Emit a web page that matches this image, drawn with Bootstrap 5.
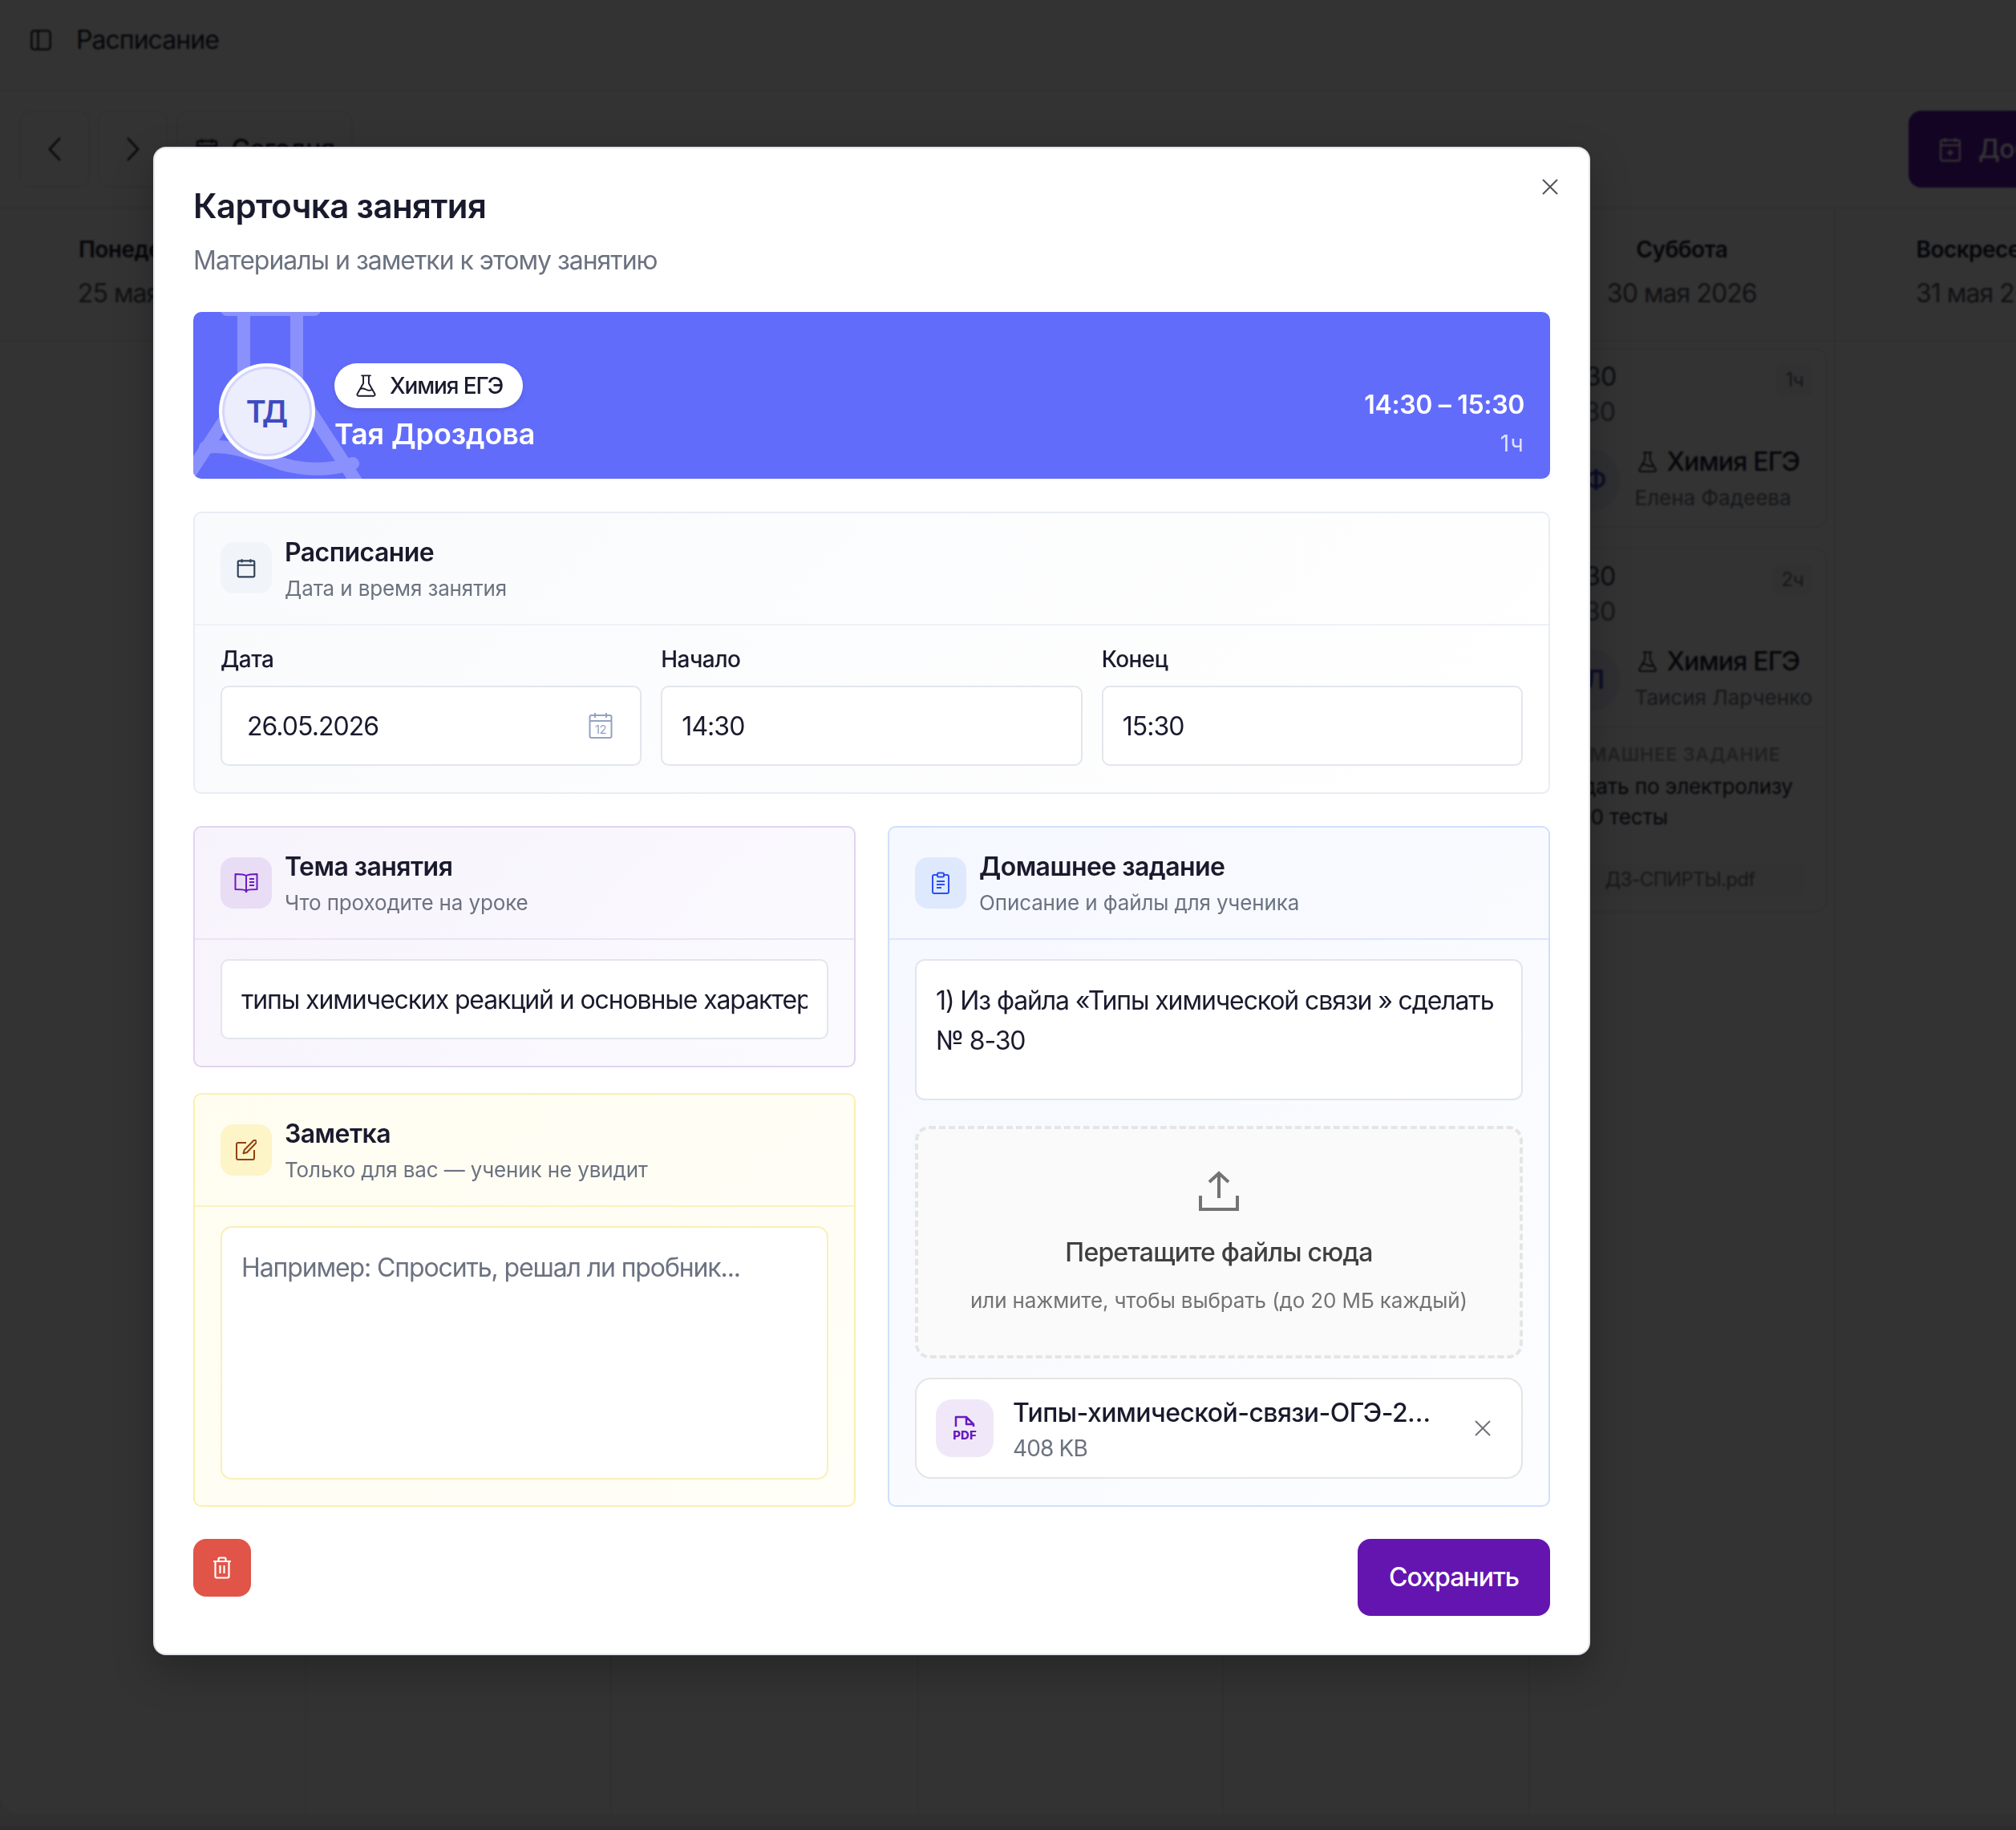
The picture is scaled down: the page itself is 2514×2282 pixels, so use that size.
<!doctype html>
<html lang="ru">
<head>
<meta charset="utf-8">
<title>Карточка занятия</title>
<link href="https://cdn.jsdelivr.net/npm/bootstrap@5.3.0/dist/css/bootstrap.min.css" rel="stylesheet">
<style>
html,body{margin:0;height:100%;overflow:hidden}
body{font-family:Inter,"Noto Sans",sans-serif;background:#f0f0f0;color:#1a1a2e;letter-spacing:-.02em;font-size:28px}
.app-main{height:2262px;background:#fff;border-bottom-left-radius:24px;overflow:hidden;width:2514px}
.app-strip{height:5px;margin-top:15px;background:#d8dbe0}
.app-top{height:114px;border-bottom:2px solid #ececec;padding:0 0 12px 37px;gap:30px;font-size:32px;letter-spacing:-.03em}
.app-tools{height:146px;border-bottom:2px solid #ececec;padding:24px;gap:10px;justify-content:flex-start}
.tool-btn{height:96px;width:88px;border:2px solid #f0f0f0;border-radius:14px;background:#fff}
.tool-today{width:220px;gap:16px;font-size:32px;font-weight:500}
.tool-add{margin-left:auto;width:300px;margin-right:-190px;background:#6415b0;color:#fff;border-radius:16px;height:96px;font-size:32px;font-weight:500;gap:20px;padding-left:37px}
.day-grid{height:2004px;width:2670.5px}
.day-col{flex:0 0 381.5px;min-width:0;border-right:2px solid #ececec}
.day-head{height:166px;border-bottom:2px solid #ececec;padding-top:31px;text-align:center}
.day-name{font-size:28px;font-weight:600;line-height:40px}
.day-date{font-size:32px;line-height:46px;margin-top:12px;color:#52525b;letter-spacing:-.03em}
.day-body{padding:8px 8px}
.lesson{border:2px solid #e8e8e8;border-radius:16px;margin-left:2px;margin-bottom:25px;overflow:hidden;height:224px}
.lesson-lg{height:455px}
.lesson-top{padding:12px 16px 0 16px}
.lesson-times{font-size:32px;font-weight:400;line-height:44px;color:#374151}
.lesson-times div+div{color:#6b7280}
.lesson-dur{font-size:24px;color:#6b7280;background:#f4f4f5;border-radius:10px;padding:0 12px;height:40px;line-height:40px;margin-top:6px}
.lesson-who{padding:19px 12px 0 21px;gap:18px}
.lesson-ava{width:80px;height:80px;border-radius:50%;background:#eef0ff;color:#3f4ac0;font-weight:600;font-size:32px;flex:none}
.lesson-subj{font-size:32px;font-weight:500;line-height:42px;gap:13px;padding-left:4px;letter-spacing:-.025em}
.lesson-name{font-size:26px;line-height:42px;margin-top:3px;color:#6b7280;letter-spacing:0}
.lesson-hw{border-top:2px solid #f0f0f0;margin-top:15px;padding:18px 24px}
.hw-cap{font-size:23px;font-weight:600;letter-spacing:.033em;color:#a1a1aa;line-height:30px;white-space:nowrap}
.hw-text{font-size:26px;line-height:38px;margin-top:6px;letter-spacing:-.004em}
.hw-file{font-size:24px;color:#6b7280;letter-spacing:-.03em;margin-top:38px;background:#fafafa;border-radius:10px;padding:4px 0 4px 58px;line-height:34px}

.scrim{background:rgba(0,0,0,.8);backdrop-filter:blur(1px);opacity:1}
.sheet{position:fixed;left:191px;top:183px;width:1792px;height:1881px;margin:0;max-width:none;z-index:1060}
.sheet-box{border:2px solid #e2e6ec;border-radius:16px;background:#fff;padding:48px;box-shadow:0 20px 50px rgba(0,0,0,.25);height:100%}
.sheet-close{position:absolute;right:38px;top:38px;width:20px;height:20px;padding:0;border:0;background:none;line-height:0}
.sheet-title{font-size:42px;font-weight:600;line-height:48px;margin:0;color:#1a1a2e;letter-spacing:-.015em}
.sheet-sub{font-size:32px;line-height:40px;margin:24px 0 44px;color:#6b7280;letter-spacing:-.032em}
.hero{height:208px;background:#626cfb;border-radius:10px;padding:64px 32px 24px;overflow:hidden;gap:24px;color:#fff;margin-bottom:41px}
.hero-flask{position:absolute;left:0;top:0}
.hero-ava{width:120px;height:120px;border-radius:50%;background:#ecedfd;border:4px solid #fff;box-shadow:inset 0 0 0 3px #d3d6fb;color:#3f4ac0;font-size:38px;font-weight:600;flex:none;letter-spacing:0}
.hero-chip{height:56px;border-radius:28px;background:#fff;color:#1a1a2e;font-size:28px;font-weight:500;padding:0 25px 0 27px;gap:17px;box-shadow:0 2px 6px rgba(0,0,0,.12);letter-spacing:-.04em}
.hero-name{font-size:36px;font-weight:600;line-height:48px;margin-top:8px;letter-spacing:-.003em}
.hero-time{font-size:32px;font-weight:600;line-height:40px;margin-bottom:8px;letter-spacing:-.01em}
.hero-dur{font-size:28px;line-height:40px;opacity:.8;letter-spacing:.05em}
.zone{border:2px solid #e8edf4;border-radius:10px;overflow:hidden;background:linear-gradient(135deg,#f9fafc,#fff)}
.zone-gap{margin-bottom:40px}
.zone-head{padding:24px 32px;gap:16px;border-bottom:2px solid #eef1f6;height:140px}
.zone-ico{width:64px;height:64px;border-radius:16px;background:#f1f5f9;color:#334155;flex:none;margin-top:-2px}
.zone-t{font-size:32px;font-weight:600;line-height:48px;padding-top:2px;color:#1a1a2e}
.zone-s{font-size:26px;line-height:42px;color:#6b7280;letter-spacing:-.005em}
.zone-body{padding:24px 32px 33px}
.z-violet{border-color:#e2d3f2;background:linear-gradient(135deg,#f7f3fc,#fbfbff)}
.z-violet .zone-head{border-color:#ece3f6}
.z-violet .zone-ico{background:#e9ddf5;color:#6a1bc0;margin-top:0}
.z-blue{border-color:#cfe0fc;background:linear-gradient(135deg,#f5f8ff,#fcfdff)}
.z-blue .zone-head{border-color:#dbe7fc}
.z-blue .zone-ico{background:#dfe9fd;color:#2b50f0;margin-top:0}
.z-blue .zone-body{padding-bottom:32px}
.z-yellow{border-color:#fbefb0;background:linear-gradient(135deg,#fffdf0,#fffef8)}
.z-yellow .zone-head{border-color:#fbf1c4}
.z-yellow .zone-ico{background:#fdf4c8;color:#92400e;margin-top:0}
.z-yellow .zone-body{padding-bottom:32px}
.fld-label{font-size:28px;font-weight:500;line-height:36px;margin-bottom:15px;display:block;color:#1a1a2e}
.fld{height:100px;border:2px solid #e2e6ec;border-radius:10px;font-size:32px;padding:0 24px;color:#1a1a2e;letter-spacing:-.03em;box-shadow:none;background-color:#fff}
.fld-date{padding-left:31px}
.fld-cal{position:absolute;right:36px;top:33px}
.fld-topic{font-weight:400;letter-spacing:-.035em;font-size:32px}
.fld-area{border:2px solid #e2e6ec;border-radius:12px;font-size:32px;line-height:50px;padding:25px 24px 23px;color:#1a1a2e;letter-spacing:-.035em;resize:none;box-shadow:none}
.fld-area::placeholder{color:#6b7280;opacity:1}
.fld-note{height:316px;border-color:#fbefb8;border-radius:14px}
.fld-hw{height:176px}
.drop{height:290px;border:4px dashed #e5e5e5;border-radius:18px;background:#fafafa;margin-top:32px;padding-top:52px;text-align:center}
.drop-ico{height:56px}
.drop-t{font-size:32px;font-weight:500;line-height:48px;margin-top:22px;color:#404040;letter-spacing:-.025em}
.drop-s{font-size:26px;line-height:40px;margin-top:16px;color:#737373;letter-spacing:-.005em}
.afile{height:126px;border:2px solid #e5e5e5;border-radius:20px;background:#fff;margin-top:24px;padding:0 38px 0 24px;gap:24px}
.afile-ico{width:72px;height:72px;border-radius:20px;background:#f0e8f8;color:#6a1bc0;flex:none}
.afile-txt{padding-top:3px}
.afile-name{font-size:32px;font-weight:500;line-height:46px;max-width:526px;letter-spacing:-.018em}
.afile-size{font-size:28px;line-height:40px;margin-top:1px;color:#6b7280;letter-spacing:-.03em}
.btn-del{width:72px;height:72px;padding:0;border:0;border-radius:16px;background:#e05548}
.btn-del:hover{background:#e05548}
.btn-keep{width:240px;height:96px;padding:0;border:0;border-radius:16px;background:#6415b0;color:#fff;font-size:32px;font-weight:500;letter-spacing:-.03em}
.btn-keep:hover{background:#6415b0;color:#fff}
.grid-two{gap:40px}
.grid-two>*{flex:0 0 826px;width:826px;padding:0}
.gap-col{gap:32px}
.foot{margin-top:40px}
svg{display:block}
</style>
</head>
<body>
<svg class="position-absolute" width="0" height="0">
<defs>
<symbol id="i-flask" viewBox="3 1.5 18 20.5"><path d="M9.5 2.5v7L4 19.2a1.3 1.3 0 0 0 1.1 1.9h13.800a1.300 1.300 0 0 0 1.100-1.900L14.500 9.500v-7M8 2.500h8M7 14.600c2-.8 3.400-.3 5 .6s3.400 1.200 5.300.2" fill="none" stroke="currentColor" stroke-width="1.400" stroke-linecap="round" stroke-linejoin="round"/></symbol>
<symbol id="i-cal" viewBox="0 0 24 24"><path d="M7 2v4M17 2v4M2.5 9h19M4 4h16a1.5 1.5 0 0 1 1.5 1.5V21a1.5 1.5 0 0 1-1.5 1.5H4A1.5 1.5 0 0 1 2.5 21V5.500A1.500 1.500 0 0 1 4 4z" fill="none" stroke="currentColor" stroke-width="2"/></symbol>
</defs>
</svg>
<div class="app-main">
  <div class="app-top d-flex align-items-center">
    <svg width="28" height="28" viewBox="0 0 24 24" fill="none" stroke="#1a1a2e" stroke-width="2"><rect x="2" y="2" width="20" height="20" rx="3"/><path d="M9 2v20"/></svg>
    <span>Расписание</span>
  </div>
  <div class="app-tools d-flex align-items-start">
    <div class="tool-btn d-flex align-items-center justify-content-center"><svg width="20" height="34" viewBox="0 0 20 34" fill="none" stroke="#1a1a2e" stroke-width="2.500"><path d="M17 3 4 17l13 14"/></svg></div>
    <div class="tool-btn d-flex align-items-center justify-content-center"><svg width="20" height="34" viewBox="0 0 20 34" fill="none" stroke="#1a1a2e" stroke-width="2.500"><path d="M3 3l13 14L3 31"/></svg></div>
    <div class="tool-btn tool-today d-flex align-items-center justify-content-center"><svg width="30" height="30"><use href="#i-cal"/></svg><span>Сегодня</span></div>
    <div class="tool-add d-flex align-items-center"><svg width="30" height="32" viewBox="0 0 24 24" fill="none" stroke="#fff" stroke-width="1.800"><path d="M7 1v4M17 1v4M2.500 8h19M4 3h16a1.500 1.500 0 0 1 1.500 1.500V22a1.500 1.500 0 0 1-1.500 1.500H4A1.500 1.500 0 0 1 2.500 22V4.500A1.500 1.500 0 0 1 4 3zM12 12.500v6M9 15.500h6"/></svg><span class="text-nowrap">Добавить</span></div>
  </div>
  <div class="day-grid d-flex">
    <div class="day-col"><div class="day-head"><div class="day-name">Понедельник</div><div class="day-date">25 мая 2026</div></div></div>
    <div class="day-col"><div class="day-head"><div class="day-name">Вторник</div><div class="day-date">26 мая 2026</div></div></div>
    <div class="day-col"><div class="day-head"><div class="day-name">Среда</div><div class="day-date">27 мая 2026</div></div></div>
    <div class="day-col"><div class="day-head"><div class="day-name">Четверг</div><div class="day-date">28 мая 2026</div></div></div>
    <div class="day-col"><div class="day-head"><div class="day-name">Пятница</div><div class="day-date">29 мая 2026</div></div></div>
    <div class="day-col">
      <div class="day-head"><div class="day-name">Суббота</div><div class="day-date">30 мая 2026</div></div>
      <div class="day-body">
        <div class="lesson">
          <div class="lesson-top d-flex justify-content-between"><div class="lesson-times"><div>14:30</div><div>15:30</div></div><div class="lesson-dur">1ч</div></div>
          <div class="lesson-who d-flex align-items-center"><div class="lesson-ava d-flex align-items-center justify-content-center">ЕФ</div><div><div class="lesson-subj d-flex align-items-center"><svg width="23" height="26"><use href="#i-flask"/></svg><span>Химия ЕГЭ</span></div><div class="lesson-name">Елена Фадеева</div></div></div>
        </div>
        <div class="lesson lesson-lg">
          <div class="lesson-top d-flex justify-content-between"><div class="lesson-times"><div>16:30</div><div>18:30</div></div><div class="lesson-dur">2ч</div></div>
          <div class="lesson-who d-flex align-items-center"><div class="lesson-ava d-flex align-items-center justify-content-center">ТЛ</div><div><div class="lesson-subj d-flex align-items-center"><svg width="23" height="26"><use href="#i-flask"/></svg><span>Химия ЕГЭ</span></div><div class="lesson-name text-nowrap">Таисия Ларченко</div></div></div>
          <div class="lesson-hw"><div class="hw-cap">ДОМАШНЕЕ ЗАДАНИЕ</div><div class="hw-text">Задать по электролизу<br>1–40 тесты</div><div class="hw-file">ДЗ-СПИРТЫ.pdf</div></div>
        </div>
      </div>
    </div>
    <div class="day-col"><div class="day-head"><div class="day-name">Воскресенье</div><div class="day-date">31 мая 2026</div></div></div>
  </div>
</div>
<div class="app-strip"></div>

<div class="modal-backdrop scrim"></div>
<div class="sheet modal-dialog">
  <div class="modal-content sheet-box d-block">
    <button type="button" class="sheet-close" aria-label="Закрыть"><svg width="20" height="20" viewBox="0 0 20 20" fill="none" stroke="#52525b" stroke-width="2"><path d="M1 1l18 18M19 1 1 19"/></svg></button>
    <h2 class="sheet-title">Карточка занятия</h2>
    <p class="sheet-sub">Материалы и заметки к этому занятию</p>

    <div class="hero d-flex position-relative">
      <svg class="hero-flask" width="300" height="208" viewBox="0 0 300 208" fill="none" stroke="#8b91fc" stroke-width="16" stroke-linecap="round"><path d="M63-3V98L-27 236M129-3V98l100 153M42-3h109M15 169c34-5 64 10 94 20 30 9 60 9 90 0"/></svg>
      <div class="hero-ava d-flex align-items-center justify-content-center position-relative">ТД</div>
      <div class="position-relative">
        <div class="hero-chip d-inline-flex align-items-center"><svg width="25" height="28"><use href="#i-flask"/></svg><span>Химия ЕГЭ</span></div>
        <div class="hero-name">Тая Дроздова</div>
      </div>
      <div class="ms-auto text-end align-self-end">
        <div class="hero-time">14:30 – 15:30</div>
        <div class="hero-dur">1ч</div>
      </div>
    </div>

    <section class="zone zone-gap">
      <div class="zone-head d-flex align-items-center">
        <div class="zone-ico d-flex align-items-center justify-content-center"><svg width="26" height="28"><use href="#i-cal"/></svg></div>
        <div><div class="zone-t">Расписание</div><div class="zone-s">Дата и время занятия</div></div>
      </div>
      <div class="zone-body">
        <div class="row g-0 gap-4 flex-nowrap">
          <div class="col"><label class="fld-label">Дата</label>
            <div class="position-relative"><input class="form-control fld fld-date" value="26.05.2026">
            <svg class="fld-cal" width="30" height="34" viewBox="0 0 30 34" fill="none" stroke="#94a3c0" stroke-width="2"><rect x="1.500" y="4" width="27" height="28" rx="2"/><path d="M1.500 11h27M8 1v6M22 1v6"/><text x="15" y="27" text-anchor="middle" font-family="Inter" font-size="15" fill="#94a3c0" stroke="none">12</text></svg></div></div>
          <div class="col"><label class="fld-label">Начало</label><input class="form-control fld" value="14:30"></div>
          <div class="col"><label class="fld-label">Конец</label><input class="form-control fld" value="15:30"></div>
        </div>
      </div>
    </section>

    <div class="row g-0 flex-nowrap grid-two">
      <div class="d-flex flex-column gap-col">
        <section class="zone z-violet">
          <div class="zone-head d-flex align-items-center">
            <div class="zone-ico d-flex align-items-center justify-content-center"><svg width="30" height="26" viewBox="0 0 30 26" fill="none" stroke="currentColor" stroke-width="2" stroke-linejoin="round"><path d="M15 4C12 2 7 2 1.500 2v19C7 21 12 21 15 22.500 18 21 23 21 28.500 21V2C23 2 18 2 15 4zM15 4v18.500M19 8h6M19 12h6M19 16h6"/><path d="M15 23v2" stroke-width="2.500"/></svg></div>
            <div><div class="zone-t">Тема занятия</div><div class="zone-s">Что проходите на уроке</div></div>
          </div>
          <div class="zone-body"><input class="form-control fld fld-topic" value="типы химических реакций и основные характеристики"></div>
        </section>
        <section class="zone z-yellow">
          <div class="zone-head d-flex align-items-center">
            <div class="zone-ico d-flex align-items-center justify-content-center"><svg width="26" height="26" viewBox="0 0 26 26" fill="none" stroke="currentColor" stroke-width="2" stroke-linejoin="round"><path d="M13 4H3a2 2 0 0 0-2 2v17a2 2 0 0 0 2 2h18a2 2 0 0 0 2-2V13"/><path d="M22 1.500a2.100 2.100 0 0 1 3 3L14 16l-4.500 1.200L10.700 13z"/></svg></div>
            <div><div class="zone-t">Заметка</div><div class="zone-s">Только для вас — ученик не увидит</div></div>
          </div>
          <div class="zone-body"><textarea class="form-control fld-area fld-note" placeholder="Например: Спросить, решал ли пробник..."></textarea></div>
        </section>
      </div>
      <section class="zone z-blue col-hw">
        <div class="zone-head d-flex align-items-center">
          <div class="zone-ico d-flex align-items-center justify-content-center"><svg width="22" height="28" viewBox="0 0 22 28" fill="none" stroke="currentColor" stroke-width="2" stroke-linejoin="round"><path d="M7 4H3a2 2 0 0 0-2 2v19a2 2 0 0 0 2 2h16a2 2 0 0 0 2-2V6a2 2 0 0 0-2-2h-4"/><rect x="7" y="1.500" width="8" height="5" rx="1.500"/><path d="M6 12h10M6 16h10M6 20h6"/></svg></div>
          <div><div class="zone-t">Домашнее задание</div><div class="zone-s">Описание и файлы для ученика</div></div>
        </div>
        <div class="zone-body">
          <textarea class="form-control fld-area fld-hw">1) Из файла «Типы химической связи » сделать № 8-30</textarea>
          <div class="drop">
            <div class="drop-ico d-flex justify-content-center"><svg width="50" height="50" viewBox="0 0 50 50" fill="none" stroke="#737373" stroke-width="4"><path d="M25 34V3M13 14 25 3l12 11M2 31v17h46V31"/></svg></div>
            <div class="drop-t">Перетащите файлы сюда</div>
            <div class="drop-s">или нажмите, чтобы выбрать (до 20 МБ каждый)</div>
          </div>
          <div class="afile d-flex align-items-center">
            <div class="afile-ico d-flex align-items-center justify-content-center"><svg width="34" height="34" viewBox="0 0 34 34" fill="none" stroke="currentColor" stroke-width="2.500" stroke-linejoin="round"><path d="M6 15V3h13l9 9v3M19 3v9h9"/><text x="17" y="31" text-anchor="middle" font-family="Inter" font-weight="800" font-size="15" fill="currentColor" stroke="none" letter-spacing="0">PDF</text></svg></div>
            <div class="flex-grow-1 overflow-hidden afile-txt"><div class="afile-name text-truncate">Типы-химической-связи-ОГЭ-2026.pdf</div><div class="afile-size">408 KB</div></div>
            <svg width="20" height="20" viewBox="0 0 20 20" fill="none" stroke="#71717a" stroke-width="2"><path d="M1 1l18 18M19 1 1 19"/></svg>
          </div>
        </div>
      </section>
    </div>

    <div class="d-flex justify-content-between align-items-start foot">
      <button type="button" class="btn btn-del d-flex align-items-center justify-content-center" aria-label="Удалить"><svg width="24" height="28" viewBox="0 0 24 28" fill="none" stroke="#fff" stroke-width="2.200"><path d="M1 6h22M3.500 6v19a1.500 1.500 0 0 0 1.500 1.500h14a1.500 1.500 0 0 0 1.500-1.500V6M7.500 6V3a1.500 1.500 0 0 1 1.500-1.500h6A1.500 1.500 0 0 1 16.500 3v3M9.500 11v10M14.500 11v10"/></svg></button>
      <button type="button" class="btn btn-keep">Сохранить</button>
    </div>
  </div>
</div>
<script src="https://cdn.jsdelivr.net/npm/bootstrap@5.3.0/dist/js/bootstrap.bundle.min.js"></script>
</body>
</html>
